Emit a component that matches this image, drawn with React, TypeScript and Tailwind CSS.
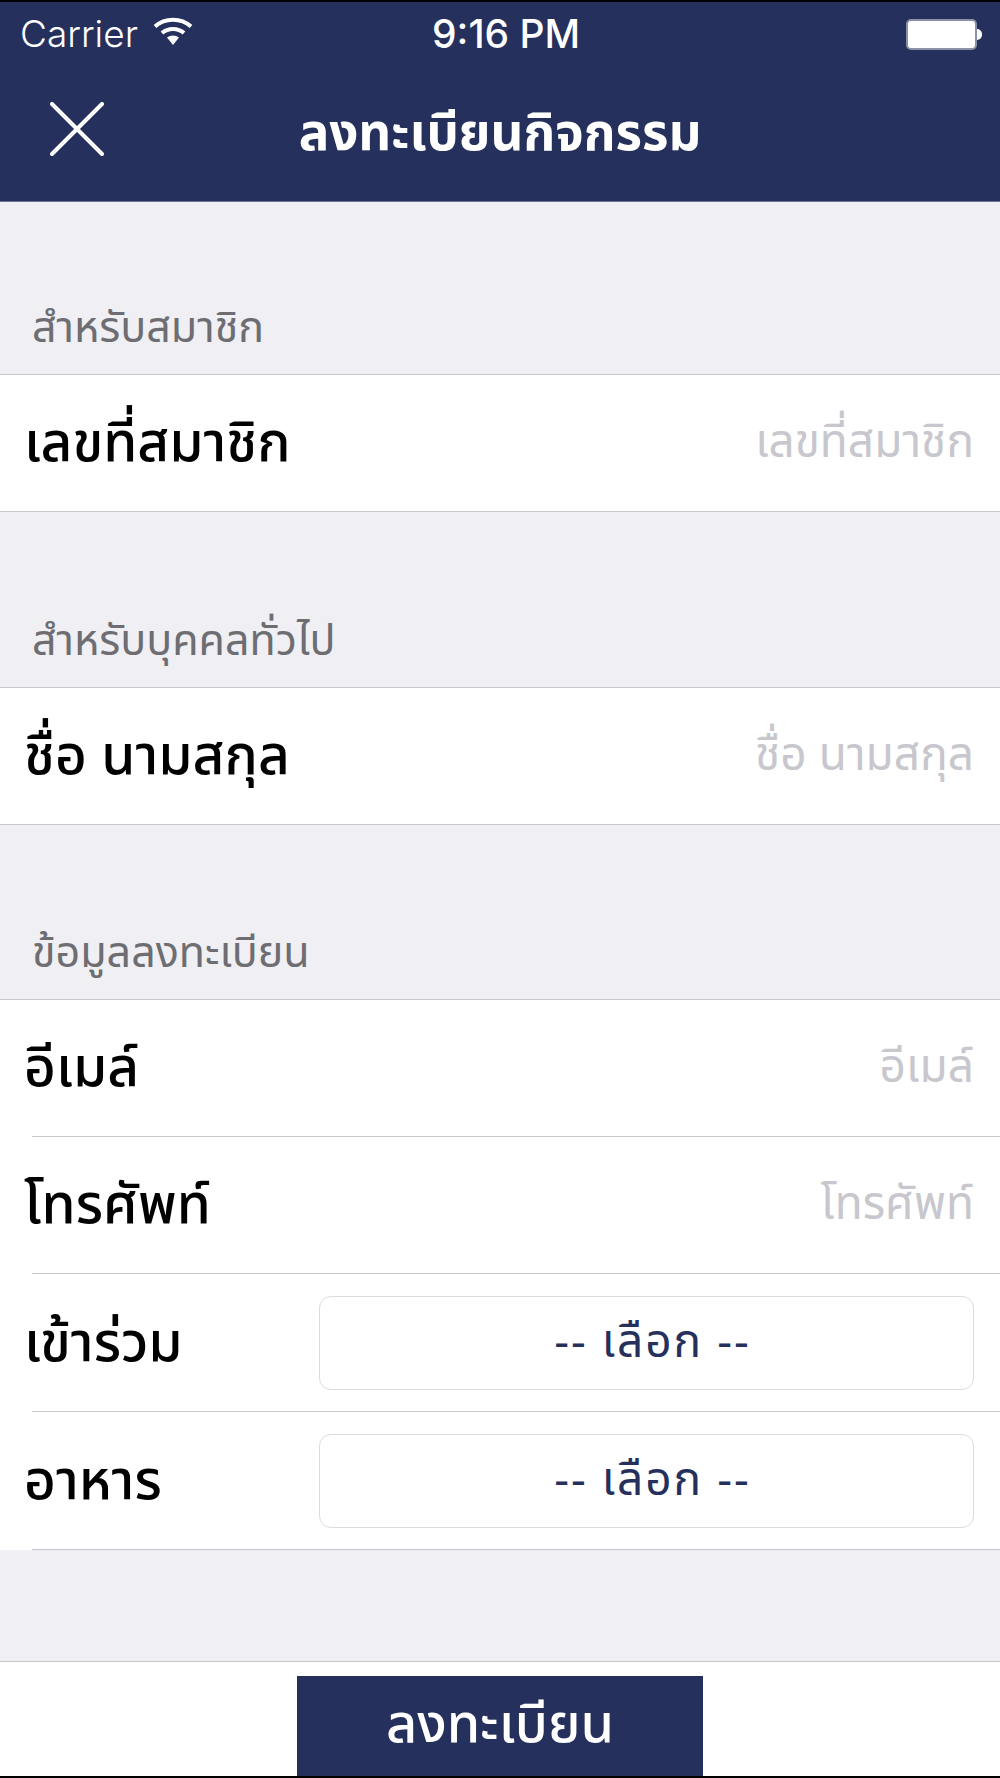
const FONT = "font-['Noto_Sans_Thai','Noto_Sans','DejaVu_Sans','Liberation_Sans',sans-serif]";

function SectionLabel({ text, className }: { text: string; className: string }) {
  return (
    <div className={`flex items-end pl-[32px] pb-[20px] text-[#6d6d72] text-[43px] leading-[50px] bg-[#efeff4] ${className}`}>
      {text}
    </div>
  );
}

function InputRow({ label, placeholder }: { label: string; placeholder: string }) {
  return (
    <div className="flex items-center justify-between h-[136px] bg-white pl-[24px] pr-[26px]">
      <span className="pt-[4px] text-black text-[55px] leading-[60px] font-medium">{label}</span>
      <span className="text-[#c7c7cd] text-[46px] leading-[50px]">{placeholder}</span>
    </div>
  );
}

function SelectRow({ label }: { label: string }) {
  return (
    <div className="flex items-center justify-between h-[137px] bg-white pl-[24px] pr-[26px]">
      <span className="pt-[4px] text-black text-[55px] leading-[60px] font-medium">{label}</span>
      <div className="flex items-center justify-center w-[655px] h-[94px] pl-[12px] rounded-[12px] border border-[#dcdcdc] text-[#25305c] text-[46px] leading-[50px] tracking-[2px]">
        -- เลือก --
      </div>
    </div>
  );
}

function Divider() {
  return (
    <div className="bg-white pl-[32px]">
      <div className="h-px bg-[#c8c7cc]" />
    </div>
  );
}

export default function App() {
  return (
    <div className={`flex flex-col w-[1000px] h-[1778px] bg-[#efeff4] overflow-hidden ${FONT}`}>
      {/* Header */}
      <header className="h-[202px] shrink-0 bg-[#25305c] border-t-2 border-black border-b border-b-[#6b7390] text-white">
        <div className="relative flex items-center h-[64px]">
          <span className="pl-[20px] text-[37px] leading-[40px] font-['Inter',sans-serif] font-light">Carrier</span>
          <svg className="ml-[15px] mb-[6px]" width="40" height="30" viewBox="0 0 40 30" fill="none">
            <path d="M2 10.5C12 1.5 28 1.5 38 10.5" stroke="white" strokeWidth="4" />
            <path d="M9 17C15 11.5 25 11.5 31 17" stroke="white" strokeWidth="4" />
            <path d="M14 21.5C17.5 18.8 22.5 18.8 26 21.5L20 29Z" fill="white" />
          </svg>
          <span className="absolute left-[432px] text-[39px] leading-[40px] font-['Inter',sans-serif] font-medium">9:16 PM</span>
          <div className="absolute left-[906px] flex items-center">
            <div className="w-[71px] h-[31px] rounded-[5px] bg-white border-2 border-[#8a90a8]" />
            <div className="w-[5px] h-[11px] rounded-r-full bg-white" />
          </div>
        </div>
        <div className="flex items-center h-[126px] relative">
          <svg className="ml-[50px]" width="54" height="54" viewBox="0 0 54 54" fill="none">
            <path d="M2 2L52 52M52 2L2 52" stroke="white" strokeWidth="4" strokeLinecap="round" />
          </svg>
          <span className="absolute left-0 right-0 mt-[12px] text-center text-[51px] leading-[60px] font-bold">ลงทะเบียนกิจกรรม</span>
        </div>
      </header>

      <SectionLabel text="สำหรับสมาชิก" className="h-[172px]" />
      <div className="border-t border-[#c8c7cc]" />
      <InputRow label="เลขที่สมาชิก" placeholder="เลขที่สมาชิก" />
      <div className="border-t border-[#c8c7cc]" />

      <SectionLabel text="สำหรับบุคคลทั่วไป" className="h-[175px]" />
      <div className="border-t border-[#c8c7cc]" />
      <InputRow label="ชื่อ นามสกุล" placeholder="ชื่อ นามสกุล" />
      <div className="border-t border-[#c8c7cc]" />

      <SectionLabel text="ข้อมูลลงทะเบียน" className="h-[174px]" />
      <div className="border-t border-[#c8c7cc]" />
      <InputRow label="อีเมล์" placeholder="อีเมล์" />
      <Divider />
      <InputRow label="โทรศัพท์" placeholder="โทรศัพท์" />
      <Divider />
      <SelectRow label="เข้าร่วม" />
      <Divider />
      <SelectRow label="อาหาร" />
      <Divider />

      <div className="flex-1" />

      {/* Footer */}
      <footer className="flex justify-center h-[117px] shrink-0 bg-white border-t border-[#c8c7cc] border-b-2 border-b-black pt-[14px]">
        <button className="w-[406px] h-full bg-[#25305c] text-white text-[54px] leading-[60px] font-medium">ลงทะเบียน</button>
      </footer>
    </div>
  );
}
